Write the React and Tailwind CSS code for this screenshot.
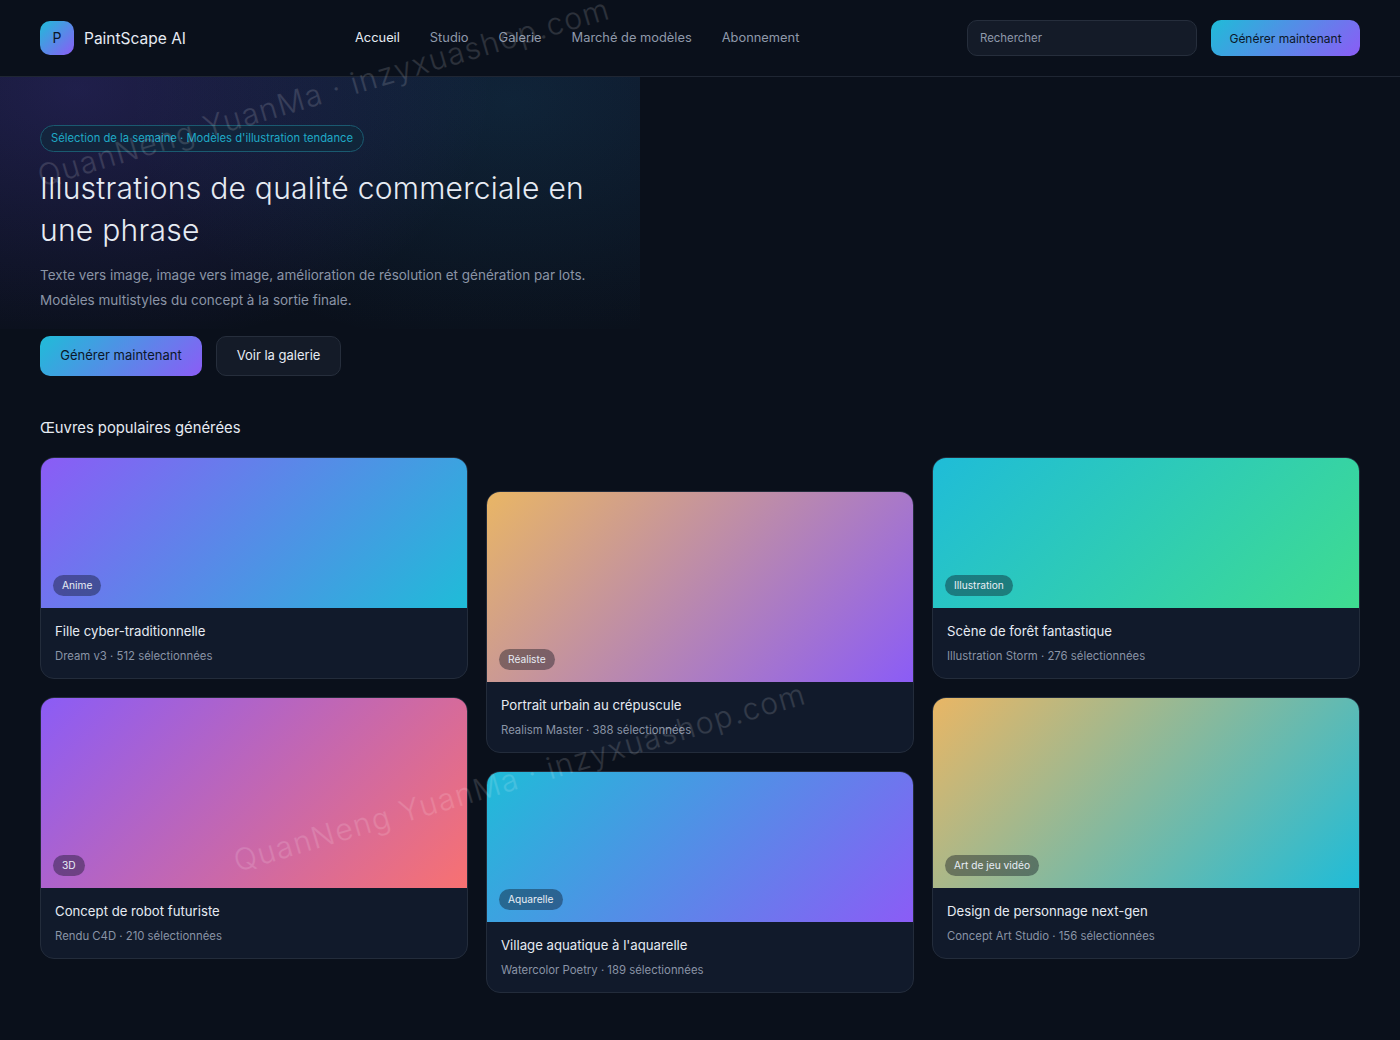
import React from 'react';

const navLinks = ['Accueil', 'Studio', 'Galerie', 'Marché de modèles', 'Abonnement'];

const columns = [
	{
		offset: '',
		cards: [
			{ title: 'Fille cyber-traditionnelle', meta: 'Dream v3 · 512 sélectionnées', tag: 'Anime', image: 'h-[150px] bg-[linear-gradient(135deg,#8b5cf6,#1fbcd8)]' },
			{ title: 'Concept de robot futuriste', meta: 'Rendu C4D · 210 sélectionnées', tag: '3D', image: 'h-[190px] bg-[linear-gradient(135deg,#8b5cf6,#f87171)]' },
		],
	},
	{
		offset: 'mt-[34px]',
		cards: [
			{ title: 'Portrait urbain au crépuscule', meta: 'Realism Master · 388 sélectionnées', tag: 'Réaliste', image: 'h-[190px] bg-[linear-gradient(135deg,#e9b665,#8b5cf6)]' },
			{ title: "Village aquatique à l'aquarelle", meta: 'Watercolor Poetry · 189 sélectionnées', tag: 'Aquarelle', image: 'h-[150px] bg-[linear-gradient(135deg,#1fbcd8,#8b5cf6)]' },
		],
	},
	{
		offset: '',
		cards: [
			{ title: 'Scène de forêt fantastique', meta: 'Illustration Storm · 276 sélectionnées', tag: 'Illustration', image: 'h-[150px] bg-[linear-gradient(135deg,#1fbcd8,#3fdc90)]' },
			{ title: 'Design de personnage next-gen', meta: 'Concept Art Studio · 156 sélectionnées', tag: 'Art de jeu vidéo', image: 'h-[190px] bg-[linear-gradient(135deg,#e9b665,#1fbcd8)]' },
		],
	},
];

function ArtCard({ card }) {
	return (
		<div className="overflow-hidden rounded-[14px] border border-[#232c3b] bg-[#111a2b]">
			<div className={`relative ${card.image}`}>
				<span className="absolute bottom-3 left-3 rounded-full bg-[#0a101b]/40 px-[9px] py-1 text-[10.2px] leading-[13px] text-[#e8edf5]">
					{card.tag}
				</span>
			</div>
			<div className="px-[14px] pt-[14px] pb-[14px]">
				<h3 className="text-[13.2px] leading-[18px] text-[#e6ebf3]">{card.title}</h3>
				<p className="mt-[9px] text-[11.35px] leading-[15px] text-[#8a94a6]">{card.meta}</p>
			</div>
		</div>
	);
}

export default function App() {
	return (
		<div className="relative min-h-[1040px] overflow-hidden bg-[#0a101b] font-['Inter',sans-serif]">
			{/* Header */}
			<header className="flex h-[77px] items-center border-b border-[#1f2633] px-10">
				<div className="flex w-[315px] items-center gap-[10px]">
					<div className="flex h-[34px] w-[34px] items-center justify-center rounded-[10px] bg-[linear-gradient(135deg,#1fbcd8,#8b5cf6)] text-sm text-[#0b1728]">
						P
					</div>
					<span className="pt-px text-[15.5px] text-[#e6ebf3]">PaintScape AI</span>
				</div>
				<nav className="flex gap-[30px] text-[12.85px]">
					{navLinks.map((link, i) => (
						<a key={link} className={i === 0 ? 'text-[#e6ebf3]' : 'text-[#8f99aa]'}>
							{link}
						</a>
					))}
				</nav>
				<div className="ml-auto flex items-center gap-[14px]">
					<input
						placeholder="Rechercher"
						className="h-9 w-[230px] rounded-[10px] border border-[#262e3c] bg-[#141b28] px-3 text-[11.4px] placeholder:text-[#8f99aa]"
					/>
					<button className="h-9 w-[149px] rounded-[10px] bg-[linear-gradient(135deg,#1fbcd8,#8b5cf6)] pt-px text-xs text-[#0b1728]">
						Générer maintenant
					</button>
				</div>
			</header>

			{/* Hero */}
			<section className="relative px-10 pt-12">
				<div className="absolute top-0 left-0 h-[252px] w-[640px] bg-[radial-gradient(ellipse_65%_105%_at_12%_5%,rgba(112,84,246,0.18),transparent),radial-gradient(ellipse_60%_100%_at_80%_10%,rgba(31,170,216,0.11),transparent),linear-gradient(to_bottom,rgba(60,60,160,0.08),transparent)]" />
				<div className="relative">
					<div className="w-fit rounded-full border border-[#1a5a70] bg-[#10283a]/70 px-[10px] py-[5px] text-[11.25px] leading-[15px] text-[#1fa9c6]">
						Sélection de la semaine · Modèles d'illustration tendance
					</div>
					<h1 className="mt-[15px] w-[560px] text-[30px] leading-[42px] font-light tracking-[0.26px] text-[#e6ebf3]">
						Illustrations de qualité commerciale en une phrase
					</h1>
					<p className="mt-3 w-[560px] text-[13.5px] leading-[25px] text-[#8a94a6]">
						Texte vers image, image vers image, amélioration de résolution et génération par lots. Modèles multistyles du concept à la sortie finale.
					</p>
					<div className="mt-[23px] flex gap-[14px]">
						<button className="h-10 w-[162px] rounded-[10px] bg-[linear-gradient(135deg,#1fbcd8,#8b5cf6)] text-[13px] text-[#0b1728]">
							Générer maintenant
						</button>
						<button className="h-10 w-[125px] rounded-[10px] border border-[#262e3c] bg-[#141b28] text-[13px] text-[#e6ebf3]">
							Voir la galerie
						</button>
					</div>
				</div>
			</section>

			{/* Gallery */}
			<section className="px-10 pt-[42px]">
				<h2 className="text-[14.8px] leading-5 text-[#e6ebf3]">Œuvres populaires générées</h2>
				<div className="mt-[19px] grid grid-cols-3 gap-[18px]">
					{columns.map((col, i) => (
						<div key={i} className={`flex flex-col gap-[18px] ${col.offset}`}>
							{col.cards.map((card) => (
								<ArtCard key={card.title} card={card} />
							))}
						</div>
					))}
				</div>
			</section>

			{/* Watermark */}
			<span className="pointer-events-none absolute top-[72px] left-[26px] -rotate-[16.5deg] text-[30px] leading-[40px] font-light tracking-[1.55px] whitespace-nowrap text-white/14">
				QuanNeng YuanMa · inzyxuashop.com
			</span>
			<span className="pointer-events-none absolute top-[757px] left-[222px] -rotate-[16.5deg] text-[30px] leading-[40px] font-light tracking-[1.55px] whitespace-nowrap text-white/14">
				QuanNeng YuanMa · inzyxuashop.com
			</span>
		</div>
	);
}
